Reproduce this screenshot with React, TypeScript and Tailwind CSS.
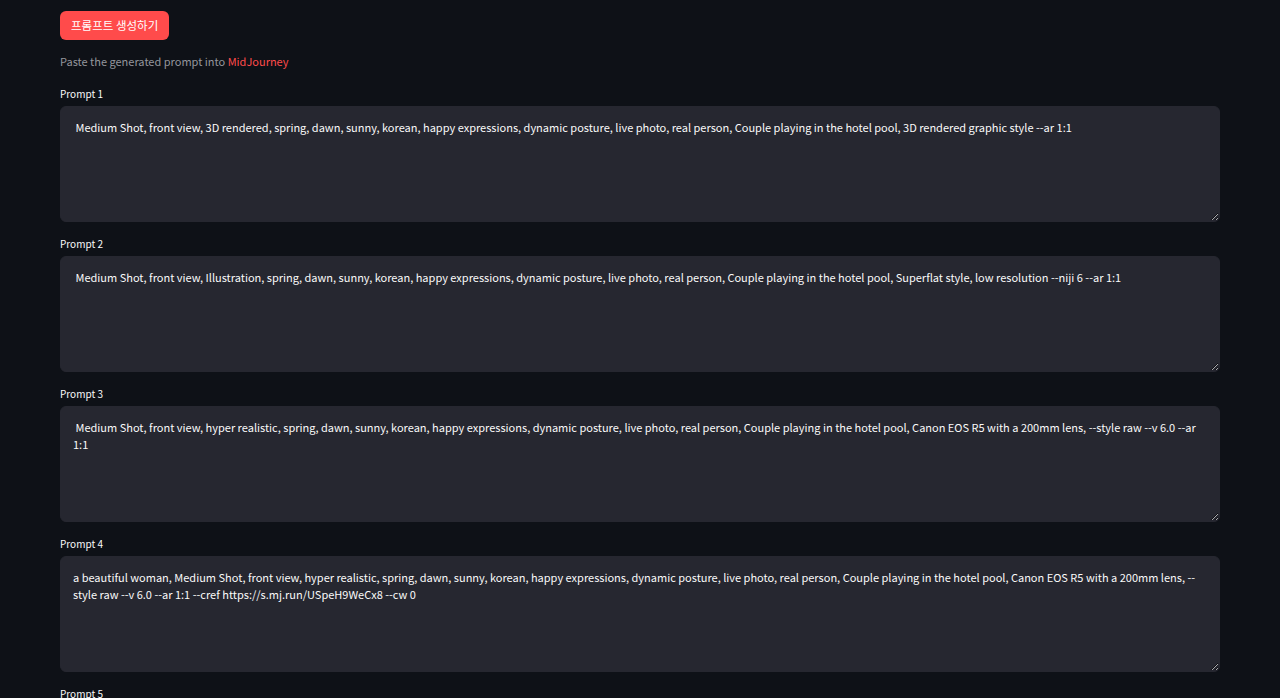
const prompts = [
  ' Medium Shot, front view, 3D rendered, spring, dawn, sunny, korean, happy expressions, dynamic posture, live photo, real person, Couple playing in the hotel pool, 3D rendered graphic style --ar 1:1',
  ' Medium Shot, front view, Illustration, spring, dawn, sunny, korean, happy expressions, dynamic posture, live photo, real person, Couple playing in the hotel pool, Superflat style, low resolution --niji 6 --ar 1:1',
  ' Medium Shot, front view, hyper realistic, spring, dawn, sunny, korean, happy expressions, dynamic posture, live photo, real person, Couple playing in the hotel pool, Canon EOS R5 with a 200mm lens, --style raw --v 6.0 --ar 1:1',
  'a beautiful woman, Medium Shot, front view, hyper realistic, spring, dawn, sunny, korean, happy expressions, dynamic posture, live photo, real person, Couple playing in the hotel pool, Canon EOS R5 with a 200mm lens, --style raw --v 6.0 --ar 1:1 --cref https://s.mj.run/USpeH9WeCx8 --cw 0',
  ' Medium Shot, front view, watercolor, spring, dawn, sunny, korean, happy expressions, dynamic posture, live photo, real person, Couple playing in the hotel pool --ar 1:1',
]

const font = "font-['Noto_Sans_CJK_KR','Noto_Sans',sans-serif]"

export default function App() {
  return (
    <div className={`min-h-screen bg-[#0e1117] text-[#fafafa] ${font}`}>
      <div className="px-[60px] pt-[11px] pb-10">
        {/* Generate button */}
        <button className="h-[29px] px-[11px] rounded-[6px] bg-[#ff4b4b] text-white text-[11.5px] leading-none">
          프롬프트 생성하기
        </button>

        {/* Caption */}
        <p className="mt-[12px] text-[11px] leading-[19px] text-[#94969c]">
          Paste the generated prompt into <span className="text-[#ff4b4b]">MidJourney</span>
        </p>

        {/* Prompt areas */}
        <div className="mt-[13px] flex flex-col gap-[12px]">
          {prompts.map((text, i) => (
            <div key={i}>
              <label className="flex h-[18px] mb-[4px] items-center text-[10px] text-[#fafafa]">
                Prompt {i + 1}
              </label>
              <textarea
                readOnly
                defaultValue={text}
                className="block w-full h-[116px] rounded-[6px] border border-[#262730] bg-[#262730] px-[12px] py-[12px] text-[11px] leading-[17px] text-[#fafafa] outline-none resize-y [color-scheme:dark]"
              />
            </div>
          ))}
        </div>
      </div>
    </div>
  )
}
